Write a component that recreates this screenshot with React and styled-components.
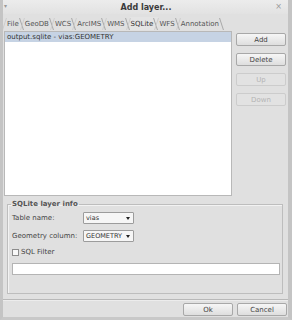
import React from "react";
import styled, { createGlobalStyle } from "styled-components";

const GlobalStyle = createGlobalStyle`
  html, body {
    margin: 0;
    padding: 0;
    background: #dcdcdc;
  }
  * {
    box-sizing: border-box;
  }
`;

const Window = styled.div`
  width: 292px;
  height: 320px;
  display: flex;
  flex-direction: column;
  background: #e0e0e0;
  border-left: 3px solid #c4c4c4;
  border-right: 4px solid #c4c4c4;
  border-bottom: 3px solid #c8c8c8;
  font-family: "DejaVu Sans", sans-serif;
  font-size: 7px;
  color: #333;
  overflow: hidden;
`;

const TitleBar = styled.div`
  height: 14px;
  flex: none;
  position: relative;
  display: flex;
  align-items: center;
  justify-content: center;
  background: linear-gradient(#ececec, #e2e2e2);
  margin: 0 -4px 0 -3px;
`;

const Title = styled.span`
  font-weight: bold;
  font-size: 8px;
  color: #3a3a3a;
`;

const MenuGlyph = styled.span`
  position: absolute;
  left: 4px;
  top: 2px;
  font-size: 6px;
  color: #999;
`;

const CloseGlyph = styled.span`
  position: absolute;
  right: 10px;
  top: 2px;
  font-size: 8px;
  color: #999;
`;

const TabRow = styled.div`
  display: flex;
  height: 16px;
  padding-left: 3px;
  align-items: flex-end;
`;

const Tab = styled.div`
  position: relative;
  height: 13px;
  padding: 0 5px 0 1px;
  display: flex;
  align-items: center;
  color: ${(p) => (p.$active ? "#333" : "#555")};
  background: ${(p) => (p.$active ? "#e4e4e4" : "transparent")};
  &::after {
    content: "";
    position: absolute;
    right: 2px;
    top: 1px;
    height: 12px;
    border-right: 1px solid #a8a8a8;
    transform: skewX(18deg);
  }
  &::before {
    content: "";
    position: absolute;
    left: -2px;
    top: 1px;
    height: 12px;
    border-left: 1px solid #cccccc;
    transform: skewX(-18deg);
  }
`;

const Main = styled.div`
  display: flex;
  gap: 4px;
  padding: 1px 2px 0 1px;
  height: 166px;
`;

const LayerList = styled.div`
  flex: 1;
  background: #fff;
  border: 1px solid #b8b8b8;
  display: flex;
  flex-direction: column;
`;

const ListItem = styled.div`
  height: 10px;
  line-height: 10px;
  padding-left: 2px;
  background: ${(p) => (p.$selected ? "#c6d3e4" : "transparent")};
  color: #333;
  white-space: nowrap;
`;

const SideButtons = styled.div`
  width: 50px;
  display: flex;
  flex-direction: column;
  gap: 7px;
  padding-top: 2px;
`;

const Button = styled.button`
  width: 50px;
  height: 13px;
  padding: 0;
  font-family: inherit;
  font-size: 7px;
  color: ${(p) => (p.disabled ? "#b4b4b4" : "#444")};
  border: 1px solid ${(p) => (p.disabled ? "#cccccc" : "#a8a8a8")};
  border-radius: 2px;
  background: ${(p) =>
    p.disabled ? "#e2e2e2" : "linear-gradient(#f6f6f6, #dedede)"};
`;

const GroupBox = styled.fieldset`
  margin: 4px 5px 0 4px;
  padding: 4px 2px 10px 4px;
  border: 1px solid #bdbdbd;
  box-shadow: inset 1px 1px 0 #f2f2f2;
  height: 94px;
  display: flex;
  flex-direction: column;
  gap: 6px;
`;

const Legend = styled.legend`
  padding: 0 1px;
  margin-left: -1px;
  font-size: 7px;
  font-weight: bold;
  color: #555;
`;

const FieldRow = styled.div`
  display: flex;
  align-items: center;
  height: 12px;
`;

const Label = styled.span`
  width: 71px;
  color: #444;
`;

const Combo = styled.div`
  width: 51px;
  height: 12px;
  background: #f6f6f6;
  border: 1px solid #9c9c9c;
  border-radius: 1px;
  display: flex;
  align-items: center;
  justify-content: space-between;
  padding: 0 3px 0 2px;
  color: #333;
  font-size: 6.5px;
`;

const Arrow = styled.span`
  width: 0;
  height: 0;
  border-left: 2.5px solid transparent;
  border-right: 2.5px solid transparent;
  border-top: 3px solid #222;
`;

const CheckRow = styled.label`
  display: flex;
  align-items: center;
  gap: 2px;
  height: 8px;
  color: #444;
`;

const Box = styled.span`
  width: 7px;
  height: 7px;
  border: 1px solid #8c8c8c;
  background: #f8f8f8;
`;

const TextField = styled.div`
  height: 12px;
  background: #fff;
  border: 1px solid #b4b4b4;
  margin-top: 1px;
`;

const Footer = styled.div`
  margin-top: auto;
  border-top: 1px solid #b8b8b8;
  box-shadow: inset 0 1px 0 #ececec;
  display: flex;
  justify-content: flex-end;
  gap: 4px;
  padding: 3px 1px 1px 0;
  height: 18px;
`;

const layers = ["output.sqlite - vias:GEOMETRY"];
const tabs = ["File", "GeoDB", "WCS", "ArcIMS", "WMS", "SQLite", "WFS", "Annotation"];

export default function App() {
  return (
    <>
      <GlobalStyle />
      <Window>
        <TitleBar>
          <MenuGlyph>▾</MenuGlyph>
          <Title>Add layer...</Title>
          <CloseGlyph>×</CloseGlyph>
        </TitleBar>
        <TabRow>
          {tabs.map((t) => (
            <Tab key={t} $active={t === "SQLite"}>
              {t}
            </Tab>
          ))}
        </TabRow>
        <Main>
          <LayerList>
            {layers.map((l, i) => (
              <ListItem key={l} $selected={i === 0}>
                {l}
              </ListItem>
            ))}
          </LayerList>
          <SideButtons>
            <Button>Add</Button>
            <Button>Delete</Button>
            <Button disabled>Up</Button>
            <Button disabled>Down</Button>
          </SideButtons>
        </Main>
        <GroupBox>
          <Legend>SQLite layer info</Legend>
          <FieldRow>
            <Label>Table name:</Label>
            <Combo>
              vias
              <Arrow />
            </Combo>
          </FieldRow>
          <FieldRow>
            <Label>Geometry column:</Label>
            <Combo>
              GEOMETRY
              <Arrow />
            </Combo>
          </FieldRow>
          <CheckRow>
            <Box />
            SQL Filter
          </CheckRow>
          <TextField />
        </GroupBox>
        <Footer>
          <Button>Ok</Button>
          <Button>Cancel</Button>
        </Footer>
      </Window>
    </>
  );
}
